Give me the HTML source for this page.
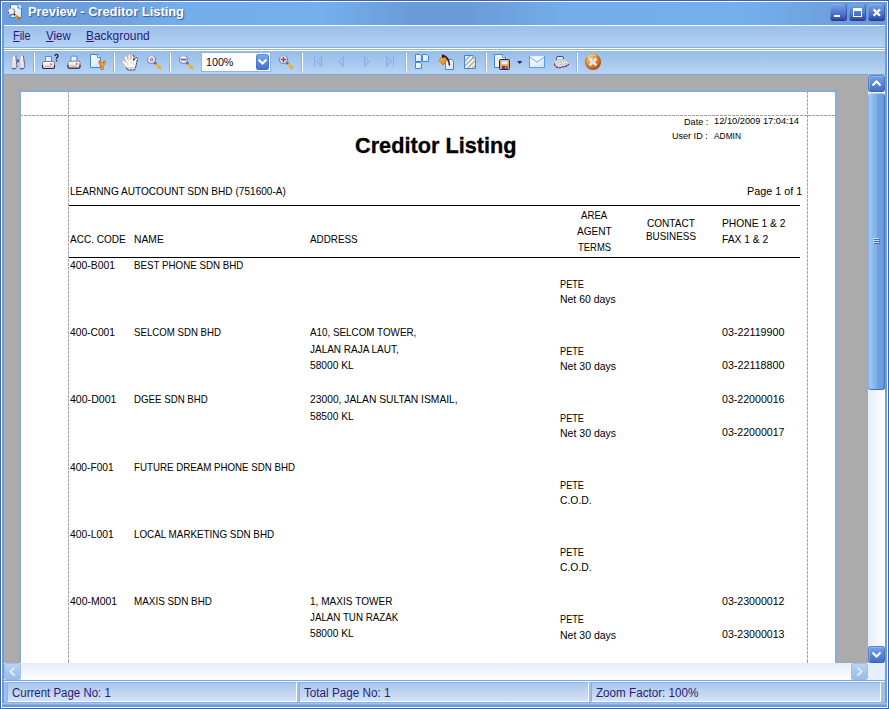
<!DOCTYPE html>
<html><head><meta charset="utf-8">
<style>
*{margin:0;padding:0;box-sizing:border-box}
html,body{width:889px;height:709px;overflow:hidden;background:#6b9ddb}
body{font-family:"Liberation Sans",sans-serif;position:relative}
#win{position:absolute;left:0;top:0;width:889px;height:709px;background:#6c9edc;overflow:hidden}
#win div,#win svg{position:absolute}
.t{position:absolute;white-space:pre;transform-origin:0 0;line-height:normal;font-family:"Liberation Sans",sans-serif}
#bo{left:0;top:0;width:889px;height:709px;border:1px solid #3d62b0}
#bi{left:1px;top:1px;width:887px;height:707px;border:1px solid #fff}
#title{left:2px;top:2px;width:885px;height:23px;background:linear-gradient(90deg,#6b9eda 0%,#6b9eda 10%,#73adeb 20%,#74b0ee 36%,#6a9cd9 46%,#6a9cd9 53%,#73adeb 64%,#74b0ee 83%,#6b9fdc 95%,#6a9cda 100%)}
#tline{left:4px;top:25px;width:881px;height:1px;background:#fff}
#menu{left:4px;top:26px;width:881px;height:22px;background:linear-gradient(180deg,#9bbfea 0%,#a8c9ed 50%,#b5d3f1 100%);border-bottom:1px solid #86aee6}
#ml1{left:4px;top:48px;width:881px;height:1px;background:#fff}
#ml2{left:4px;top:49px;width:881px;height:1px;background:#8cb2e5}
#ml3{left:4px;top:50px;width:881px;height:1px;background:#fff}
#tool{left:4px;top:51px;width:881px;height:23px;background:linear-gradient(180deg,#97bce9 0%,#a7c8ed 50%,#b8d4f1 100%)}
#tl{left:4px;top:74px;width:881px;height:1px;background:#79a6e0}
#gray{left:4px;top:75px;width:864px;height:588px;background:#ababab}
#page{left:19px;top:90px;width:818px;height:573px;background:#fff;border:2px solid #8aaad9;border-bottom:none}
.sep{width:1px;height:19px;top:53px;background:#fff;box-shadow:-1px 0 0 #8fb4e6}
.vd{width:1px;background:repeating-linear-gradient(180deg,#a2a2a2 0,#a2a2a2 3px,transparent 3px,transparent 4px);background-position:0 -1px}
.hd{height:1px;background:repeating-linear-gradient(90deg,#a2a2a2 0,#a2a2a2 3px,transparent 3px,transparent 4px);background-position:-1px 0}
.rule{height:1px;background:#000;left:69px;width:731px}
/* scrollbars */
#vs{left:868px;top:75px;width:17px;height:588px;background:linear-gradient(90deg,#e3eefc 0%,#f4f8fe 60%,#fdfeff 100%)}
#hs{left:4px;top:663px;width:864px;height:17px;background:linear-gradient(180deg,#e3eefc 0%,#f4f8fe 60%,#fdfeff 100%)}
#corner{left:868px;top:663px;width:17px;height:17px;background:#e6f0fc}
.sbtn{width:17px;height:17px;border-radius:3px;background:linear-gradient(180deg,#7aa5e6 0%,#5c8bd8 45%,#3f6cc4 100%);box-shadow:inset 0 0 0 1px rgba(60,90,180,.55), inset 1px 1px 0 1px rgba(160,200,245,.5)}
.sbtn.dis{background:linear-gradient(180deg,#bdd5f2 0%,#a6c5ec 55%,#9bbce8 100%);box-shadow:inset 0 0 0 1px rgba(150,185,230,.7)}
#thumb{left:868px;top:93px;width:17px;height:297px;border-radius:3px;background:linear-gradient(90deg,#7eaae6 0%,#a0c8f4 10%,#9cc4f2 18%,#8ab7ec 30%,#84b2ea 48%,#70a1e3 55%,#6c9de0 85%,#5d8dd6 92%,#466cbe 100%);box-shadow:inset 0 1px 0 rgba(190,220,250,.8), inset 0 -1px 0 rgba(60,95,185,.8)}
/* status */
#sl1{left:4px;top:680px;width:881px;height:1px;background:#7fa9e1}
#sl2{left:4px;top:681px;width:881px;height:1px;background:#f4f8fe}
#status{left:4px;top:682px;width:881px;height:21px;background:#9fc0ea;border-bottom:1px solid #8cb1e4}
.pan{top:682px;height:20px;background:linear-gradient(180deg,#a9c7ec 0%,#c0d6f1 55%,#d3e3f6 100%);border-top:1px solid #8cb1e4;border-left:1px solid #8cb1e4;border-bottom:1px solid #fff;border-right:1px solid #fff}
#sb1{left:2px;top:703px;width:885px;height:4px;background:linear-gradient(180deg,#b0ccf0,#7faae2 40%,#5c90d6)}
.wbtn{top:4px;width:17px;height:17px;border-radius:3px;background:linear-gradient(180deg,#76a5e6 0%,#5f8cd8 30%,#4a72c8 60%,#3450ac 88%,#2a2a8c 100%);box-shadow:inset -1px 0 0 rgba(45,60,150,.55),inset 1px 1px 0 rgba(150,190,240,.35)}
</style></head><body>
<div id="win">
<div id="title"></div>
<div id="tline"></div>
<div id="menu"></div>
<div id="ml1"></div><div id="ml2"></div><div id="ml3"></div>
<div id="tool"></div><div id="tl"></div>
<div class="sep" style="left:34px"></div><div class="sep" style="left:114px"></div><div class="sep" style="left:170px"></div><div class="sep" style="left:302px"></div><div class="sep" style="left:406px"></div><div class="sep" style="left:486px"></div><div class="sep" style="left:577px"></div>
<div id="combo" style="left:201px;top:52px;width:70px;height:20px;background:#fff;border:1px solid #8fb4e8"></div>
<div id="cbtn" style="left:256px;top:54px;width:13px;height:16px;border-radius:3px;background:linear-gradient(180deg,#7fb0ee 0%,#5b8fe0 45%,#3f6fcc 100%);box-shadow:inset 0 0 0 1px rgba(60,100,190,.5)"></div>
<svg style="left:256px;top:54px" width="13" height="16" viewBox="0 0 13 16"><path d="M2.6 5.6 L6.5 9.500 L10.400 5.600" fill="none" stroke="#fff" stroke-width="2.200"/></svg>
<div id="gray"></div>
<div id="page"></div>
<div class="hd" style="left:21px;top:115px;width:815px"></div>
<div class="vd" style="left:68px;top:92px;height:571px"></div>
<div class="vd" style="left:807px;top:92px;height:571px"></div>
<div class="rule" style="top:205px"></div>
<div class="rule" style="top:257px"></div>
<div id="vs"></div><div id="hs"></div><div id="corner"></div>
<div class="sbtn" style="left:868px;top:75px"></div>
<svg style="left:868px;top:75px" width="17" height="17" viewBox="0 0 17 17"><path d="M4.5 10.5 L8.5 6.5 L12.5 10.5" fill="none" stroke="#fff" stroke-width="2"/></svg>
<div id="thumb"></div>
<svg style="left:868px;top:236px" width="17" height="10" viewBox="0 0 17 10"><path d="M5 2.500 H11 M5 4.500 H11 M5 6.500 H11" stroke="#cfe2fb" stroke-width="1"/><path d="M6 3.500 H12 M6 5.500 H12 M6 7.500 H12" stroke="#4169c0" stroke-width="1"/></svg>
<div class="sbtn" style="left:868px;top:646px"></div>
<svg style="left:868px;top:646px" width="17" height="17" viewBox="0 0 17 17"><path d="M4.5 6.5 L8.5 10.5 L12.5 6.5" fill="none" stroke="#fff" stroke-width="2"/></svg>
<div class="sbtn dis" style="left:4px;top:663px"></div>
<svg style="left:4px;top:663px" width="17" height="17" viewBox="0 0 17 17"><path d="M10.5 4.5 L6.5 8.5 L10.5 12.5" fill="none" stroke="#dfeaf9" stroke-width="2"/></svg>
<div class="sbtn dis" style="left:851px;top:663px"></div>
<svg style="left:851px;top:663px" width="17" height="17" viewBox="0 0 17 17"><path d="M6.5 4.5 L10.5 8.5 L6.5 12.5" fill="none" stroke="#dfeaf9" stroke-width="2"/></svg>
<div id="sl1"></div><div id="sl2"></div><div id="status"></div>
<div class="pan" style="left:7px;width:290px"></div>
<div class="pan" style="left:299px;width:290px"></div>
<div class="pan" style="left:591px;width:290px"></div>
<div id="sb1"></div>
<div class="wbtn" style="left:830px"></div><div class="wbtn" style="left:849px"></div><div class="wbtn" style="left:868px"></div>
<svg style="left:830px;top:4px" width="55" height="17" viewBox="0 0 55 17"><rect x="4" y="11" width="6" height="2" fill="#fff"/><rect x="23.5" y="4.500" width="8" height="8" fill="none" stroke="#fff" stroke-width="1"/><rect x="23" y="4" width="9" height="3" fill="#fff"/><path d="M43.600 5.400 L50 11.800 M50 5.400 L43.600 11.800" stroke="#fff" stroke-width="2.200"/></svg>
<svg style="left:0;top:0" width="889" height="80" viewBox="0 0 889 80">
<defs>
<linearGradient id="pg" x1="0" y1="0" x2="1" y2="1"><stop offset="0" stop-color="#ffffff"/><stop offset="1" stop-color="#cfe2f7"/></linearGradient>
<linearGradient id="hn" x1="0" y1="0" x2="1" y2="1"><stop offset="0" stop-color="#f6c45a"/><stop offset="1" stop-color="#d8741a"/></linearGradient>
<linearGradient id="pr" x1="0" y1="0" x2="0" y2="1"><stop offset="0" stop-color="#ffffff"/><stop offset="1" stop-color="#cfcfd8"/></linearGradient>
<radialGradient id="cl" cx="0.35" cy="0.3" r="0.85"><stop offset="0" stop-color="#f9cf78"/><stop offset="0.45" stop-color="#e38f34"/><stop offset="0.8" stop-color="#bb4f1c"/><stop offset="1" stop-color="#a03812"/></radialGradient>
<linearGradient id="ln" x1="0" y1="0" x2="1" y2="1"><stop offset="0" stop-color="#ffffff"/><stop offset="1" stop-color="#c4e2f6"/></linearGradient>
<pattern id="hat" width="3.5" height="3.5" patternUnits="userSpaceOnUse" patternTransform="rotate(-45)"><rect width="3.5" height="3.5" fill="#f4f4f4"/><rect width="3.5" height="1.6" fill="#b5b2a8"/></pattern>
</defs>
<!-- title icon -->
<g>
<path d="M10.500 4.500 H18 V8 H21.500 V17.500 H10.500 Z" fill="url(#pg)" stroke="#3a82d2" stroke-width="1"/>
<path d="M18.600 4.200 L22 7.600 H18.600 Z" fill="#fdfdfb"/>
<path d="M18.600 4.200 L22 7.600" stroke="#d9d2c0" stroke-width="0.600"/>
<path d="M14.600 14.600 L19 18.800" stroke="url(#hn)" stroke-width="2.600" stroke-linecap="round"/>
<path d="M17 16.300 L19.300 18.600" stroke="#c8601a" stroke-width="1.400" stroke-linecap="round" opacity="0.700"/>
<circle cx="14.400" cy="14.500" r="0.900" fill="#15101c"/>
<circle cx="11.500" cy="11.500" r="3.100" fill="url(#ln)" stroke="#cdb98a" stroke-width="1"/>
<path d="M13.300 9 A3.100 3.100 0 0 1 10 14.300" fill="none" stroke="#3a46a8" stroke-width="1" stroke-dasharray="1.600 0.700"/>
<rect x="8" y="12" width="1" height="1" fill="#7a1a8a"/><rect x="11" y="14.300" width="1.200" height="0.900" fill="#b8283a"/>
</g>
<!-- binoculars -->
<g>
<path d="M13.200 55.600 Q14.500 54.900 15.800 55.600 L16.800 65.500 Q16.800 69 14 69 Q11.200 69 11.200 65.500 Z" fill="url(#pr)" stroke="#cdbfa8" stroke-width="1"/>
<path d="M15.800 55.600 L16.800 65.500 Q16.800 69 14 69 Q12.500 69 11.800 68" fill="none" stroke="#3c3a98" stroke-width="0.900" stroke-dasharray="2.200 0.800"/>
<path d="M20.700 55.600 Q22 54.900 23.300 55.600 L24.800 65.500 Q24.800 69 22 69 Q19.200 69 19.200 65.500 Z" fill="url(#pr)" stroke="#cdbfa8" stroke-width="1"/>
<path d="M23.300 55.600 L24.800 65.500 Q24.800 69 22 69 Q20.500 69 19.800 68" fill="none" stroke="#3c3a98" stroke-width="0.900" stroke-dasharray="2.200 0.800"/>
<rect x="16.800" y="59.500" width="2.400" height="2.600" fill="#4a5ab8"/>
<circle cx="14" cy="66" r="2.100" fill="#cfe6f8"/><circle cx="22" cy="66" r="2.100" fill="#cfe6f8"/>
<path d="M12.400 68.400 Q14 69.300 15.600 68.400 M20.400 68.400 Q22 69.300 23.600 68.400" stroke="#8a2a4a" stroke-width="0.700" fill="none"/>
</g>
<!-- printers -->
<g id="prn">
<path d="M45.500 62 V56.500 H51.500 V62" fill="url(#pg)" stroke="#4a92dc" stroke-width="1"/>
<rect x="42.500" y="61.500" width="12" height="7" rx="1.500" fill="url(#pr)" stroke="#8a7a90" stroke-width="1"/>
<path d="M42.500 65 V67 Q42.500 68.500 44 68.500 H53 Q54.500 68.500 54.500 67 V65" fill="none" stroke="#3a1a3a" stroke-width="1.100"/>
<rect x="45" y="66" width="6" height="1" fill="#c8b48a"/>
<rect x="50.500" y="63.500" width="1.300" height="1.300" fill="#8a1a2a"/>
</g>
<path d="M55 56 Q55 54.300 56.500 54.300 Q58 54.300 58 56 Q58 57 56.500 58 V59.200" fill="none" stroke="#241a5a" stroke-width="1.300"/><rect x="55.800" y="60.200" width="1.400" height="1.300" fill="#241a5a"/>
<use href="#prn" x="25.500" y="-0.300"/>
<!-- page+wrench -->
<g>
<path d="M90.500 54.500 H97.500 L100.500 57.500 V67.500 H90.500 Z" fill="url(#pg)" stroke="#3f88d8" stroke-width="1"/>
<path d="M97.500 54.500 V57.500 H100.500" fill="#fff" stroke="#3f88d8" stroke-width="0.900"/>
<path d="M99 61 V63.200 Q99 65 101 65.300 V69.500 H103.200 V65.300 Q105.200 65 105.200 63.200 V61 H103.700 V63 H100.500 V61 Z" fill="#f4a634" stroke="#c8701a" stroke-width="0.900"/>
</g>
<!-- hand -->
<g>
<path d="M127.500 70 L126.500 67.500 L122.800 63 Q121.600 61.200 122.800 60.500 Q124 60 125.500 62 L126.300 63 L124.600 58 Q124.200 56.400 125.400 56.100 Q126.500 55.900 127 57.300 L128.200 60.500 L128 56 Q128 54.400 129.300 54.400 Q130.500 54.400 130.600 56 L130.800 60 L131.500 56.300 Q131.800 54.900 133 55.100 Q134.200 55.400 134 57 L133.500 60.800 L135 58.600 Q135.800 57.300 136.900 57.800 Q137.900 58.400 137.300 60 L136.300 64 Q136 67 134.500 70 Z" fill="#fff" stroke="#c9bda2" stroke-width="0.900" stroke-linejoin="round"/>
<path d="M133 55.100 Q134.200 55.400 134 57 L133.500 60.800 L135 58.600 Q135.800 57.300 136.900 57.800 Q137.900 58.400 137.300 60 L136.300 64 Q136 67 134.500 70 L128 70" fill="none" stroke="#2c1c70" stroke-width="0.900" stroke-dasharray="2.500 0.700"/>
<path d="M126.500 67.500 L127.500 70" stroke="#2c1c70" stroke-width="0.900"/>
<path d="M127.300 62 L128.200 65 M130.800 61 V64.500 M133.300 62 L132.800 65" stroke="#c8d4e8" stroke-width="0.700"/>
<path d="M128 69 H134.500 L135.300 67 H127.200 Z" fill="#d8d8d8"/>
</g>
<!-- magnifiers -->
<g id="mag">
<path d="M154.800 62.800 L160 67.800" stroke="#f0a428" stroke-width="2.600" stroke-linecap="round"/>
<path d="M157.300 64.300 l-1.300 1.300 M158.800 65.800 l-1.300 1.300" stroke="#f8dc9a" stroke-width="0.700"/>
<path d="M154.200 62.200 L156 64" stroke="#3f6fc0" stroke-width="2.400"/>
<circle cx="151.500" cy="59.500" r="4" fill="url(#ln)" stroke="#6690d4" stroke-width="1.200"/>
<path d="M147.900 57.800 A4 4 0 0 1 153.500 56" fill="none" stroke="#a6c4ee" stroke-width="1.100"/>
</g>
<circle cx="151.500" cy="59.500" r="1.300" fill="#f6d8a0" stroke="#c04028" stroke-width="0.900"/>
<use href="#mag" x="32"/>
<rect x="180.800" y="58.800" width="5.400" height="1.500" fill="#c8342a"/>
<use href="#mag" x="132"/>
<path d="M280.800 59.500 H286.200 M283.500 56.800 V62.200" stroke="#c8342a" stroke-width="1.500"/>
<!-- nav arrows disabled -->
<g fill="#9dbfeb" stroke="#86afe6" stroke-width="1" stroke-linejoin="round">
<path d="M314.500 56 V67" fill="none"/><path d="M321.500 56.500 L316 61.500 L321.500 66.500 Z"/>
<path d="M343.500 56.500 L338.500 61.500 L343.500 66.500 Z"/>
<path d="M364.500 56.500 L369.500 61.500 L364.500 66.500 Z"/>
<path d="M386.500 56.500 L392 61.500 L386.500 66.500 Z"/><path d="M393.500 56 V67" fill="none"/>
</g>
<!-- multi pages -->
<g fill="url(#pg)" stroke="#3f88d8" stroke-width="1" stroke-linejoin="miter">
<path d="M415.500 54.500 H420 L421.500 56 V61.500 H415.500 Z"/><path d="M422.500 54.500 H427 L428.500 56 V61.500 H422.500 Z"/><path d="M415.500 62.500 H420 L421.500 64 V68.500 H415.500 Z"/>
</g>
<!-- bucket -->
<g>
<path d="M445.500 59.500 H451.500 L453.500 61.500 V69.500 H445.500 Z" fill="url(#pg)" stroke="#3f88d8" stroke-width="1"/>
<path d="M443 55.800 L447.500 60.300 L443 65 L438.800 60.500 Z" fill="url(#hn)" stroke="#c07a28" stroke-width="0.800"/>
<path d="M442.700 54.500 L443 58 M443 55.500 Q449 57 449.500 65.500" fill="none" stroke="#2e0c10" stroke-width="1.500"/>
</g>
<!-- hatched page -->
<g>
<path d="M464.500 55.500 H473 L475.500 58 V68.500 H464.500 Z" fill="url(#hat)" stroke="#3f88d8" stroke-width="1"/>
<path d="M473 55.500 V58 H475.500" fill="#fff" stroke="#3f88d8" stroke-width="0.900"/>
</g>
<!-- export -->
<g>
<path d="M494.500 54.500 H502.500 L505.500 57.500 V67.500 H494.500 Z" fill="url(#pg)" stroke="#3f88d8" stroke-width="1"/>
<path d="M502.500 54.500 V57.500 H505.500" fill="#fff" stroke="#3f88d8" stroke-width="0.900"/>
<rect x="499.500" y="59.500" width="10" height="10" rx="1" fill="#e9a440" stroke="#4a2410" stroke-width="1"/>
<rect x="501.500" y="60" width="6" height="4.300" fill="#e8f2fc"/><rect x="501.500" y="60" width="6" height="1.500" fill="#a8c8f0"/>
<rect x="502" y="66" width="5.500" height="3" fill="#4a3ab8"/><rect x="505" y="66.500" width="1.300" height="2" fill="#e9a440"/>
<path d="M517 61 H522.500 L519.750 64 Z" fill="#38188a"/>
</g>
<!-- envelope -->
<g>
<rect x="529.500" y="56.500" width="15" height="11" fill="url(#pg)" stroke="#5a9ee6" stroke-width="1"/>
<path d="M530 56.500 H544" stroke="#dfeefc" stroke-width="1"/>
<path d="M530 57.300 L537 62 L544 57.300" fill="#f4f9ff" stroke="#6aa8ea" stroke-width="1"/>
</g>
<!-- send -->
<g>
<path d="M556.500 60.500 V57.800 Q556.500 56.500 558 56.500 H562 Q563.500 56.500 563.500 58 V60" fill="#d6e4f6" stroke="#3c4cb4" stroke-width="1"/>
<path d="M554.500 62.800 Q555 60.200 558 60 L564.500 59.500 Q569 61 568.600 64 Q567.200 66.500 563 66.800 Q559 68.600 556.500 67 Q554 65.500 554.500 62.800 Z" fill="#dcdcd8" stroke="#c4bca8" stroke-width="0.800"/>
<path d="M554.600 63.500 Q554.400 65.800 556.500 67 Q559 68.600 563 66.800 Q567.200 66.500 568.600 64" fill="none" stroke="#6a1a88" stroke-width="1.100" stroke-dasharray="2.600 0.600"/>
<path d="M557 63.500 Q560 61 564 61.500 M559 65.500 Q562 63.500 566.500 63.800" stroke="#a9c6ec" stroke-width="1" fill="none"/>
<path d="M557.500 62 L559 64.500 M562 61 L564 64" stroke="#f4f4f0" stroke-width="0.800"/>
</g>
<!-- close -->
<g>
<circle cx="593" cy="62" r="8" fill="url(#cl)"/>
<circle cx="593" cy="62" r="7.500" fill="none" stroke="#b4501c" stroke-width="1" opacity="0.550"/>
<path d="M587.500 57.500 A7 7 0 0 1 596 55.700" fill="none" stroke="#fde7a8" stroke-width="1.200" opacity="0.800"/>
<path d="M589.600 58.600 L596.400 65.400 M596.400 58.600 L589.600 65.400" stroke="#f1f5fb" stroke-width="2.200"/>
<path d="M591.500 60.500 L594.500 63.500 M594.500 60.500 L591.500 63.500" stroke="#bcd9f4" stroke-width="1.400"/>
</g>
</svg>

<span class="t" style="left:355.3px;top:132.69px;font-size:22px;transform:scaleX(0.9861);color:#000;font-weight:bold;-webkit-text-stroke:0.3px #000;">Creditor Listing</span>
<span class="t" style="left:684.4px;top:115.81px;font-size:9.6px;transform:scaleX(0.9489);color:#000;">Date :</span>
<span class="t" style="left:713.6px;top:114.81px;font-size:9.6px;transform:scaleX(0.9656);color:#000;">12/10/2009 17:04:14</span>
<span class="t" style="left:672.3px;top:129.81px;font-size:9.6px;transform:scaleX(0.9430);color:#000;">User ID :</span>
<span class="t" style="left:713.8px;top:129.81px;font-size:9.6px;transform:scaleX(0.8732);color:#000;">ADMIN</span>
<span class="t" style="left:70.3px;top:184.89px;font-size:11.5px;transform:scaleX(0.8767);color:#000;">LEARNNG AUTOCOUNT SDN BHD (751600-A)</span>
<span class="t" style="left:747.2px;top:184.89px;font-size:11.5px;transform:scaleX(0.9417);color:#000;">Page 1 of 1</span>
<span class="t" style="left:70.3px;top:232.59px;font-size:11.5px;transform:scaleX(0.8732);color:#000;">ACC. CODE</span>
<span class="t" style="left:134.2px;top:232.59px;font-size:11.5px;transform:scaleX(0.8967);color:#000;">NAME</span>
<span class="t" style="left:310.3px;top:232.59px;font-size:11.5px;transform:scaleX(0.8578);color:#000;">ADDRESS</span>
<span class="t" style="left:581.2px;top:209.19px;font-size:11.5px;transform:scaleX(0.8395);color:#000;">AREA</span>
<span class="t" style="left:577.1px;top:224.59px;font-size:11.5px;transform:scaleX(0.8782);color:#000;">AGENT</span>
<span class="t" style="left:577.8px;top:241.49px;font-size:11.5px;transform:scaleX(0.8224);color:#000;">TERMS</span>
<span class="t" style="left:647.3px;top:216.79px;font-size:11.5px;transform:scaleX(0.8751);color:#000;">CONTACT</span>
<span class="t" style="left:646.3px;top:229.59px;font-size:11.5px;transform:scaleX(0.8595);color:#000;">BUSINESS</span>
<span class="t" style="left:722.2px;top:216.79px;font-size:11.5px;transform:scaleX(0.8950);color:#000;">PHONE 1 &amp; 2</span>
<span class="t" style="left:722.2px;top:233.19px;font-size:11.5px;transform:scaleX(0.8941);color:#000;">FAX 1 &amp; 2</span>
<span class="t" style="left:70.3px;top:258.89px;font-size:11.5px;transform:scaleX(0.9023);color:#000;">400-B001</span>
<span class="t" style="left:134.2px;top:258.89px;font-size:11.5px;transform:scaleX(0.8489);color:#000;">BEST PHONE SDN BHD</span>
<span class="t" style="left:560.2px;top:277.89px;font-size:11.5px;transform:scaleX(0.7988);color:#000;">PETE</span>
<span class="t" style="left:560.2px;top:293.39px;font-size:11.5px;transform:scaleX(0.9092);color:#000;">Net 60 days</span>
<span class="t" style="left:70.3px;top:325.79px;font-size:11.5px;transform:scaleX(0.8908);color:#000;">400-C001</span>
<span class="t" style="left:134.2px;top:325.79px;font-size:11.5px;transform:scaleX(0.8403);color:#000;">SELCOM SDN BHD</span>
<span class="t" style="left:310.3px;top:325.79px;font-size:11.5px;transform:scaleX(0.8559);color:#000;">A10, SELCOM TOWER,</span>
<span class="t" style="left:310.3px;top:342.99px;font-size:11.5px;transform:scaleX(0.8673);color:#000;">JALAN RAJA LAUT,</span>
<span class="t" style="left:310.3px;top:358.99px;font-size:11.5px;transform:scaleX(0.8873);color:#000;">58000 KL</span>
<span class="t" style="left:560.2px;top:344.79px;font-size:11.5px;transform:scaleX(0.7988);color:#000;">PETE</span>
<span class="t" style="left:560.2px;top:360.29px;font-size:11.5px;transform:scaleX(0.9141);color:#000;">Net 30 days</span>
<span class="t" style="left:722.3px;top:325.79px;font-size:11.5px;transform:scaleX(0.9337);color:#000;">03-22119900</span>
<span class="t" style="left:722.3px;top:358.79px;font-size:11.5px;transform:scaleX(0.9337);color:#000;">03-22118800</span>
<span class="t" style="left:70.3px;top:392.79px;font-size:11.5px;transform:scaleX(0.9185);color:#000;">400-D001</span>
<span class="t" style="left:134.2px;top:392.79px;font-size:11.5px;transform:scaleX(0.8430);color:#000;">DGEE SDN BHD</span>
<span class="t" style="left:310.3px;top:392.79px;font-size:11.5px;transform:scaleX(0.8945);color:#000;">23000, JALAN SULTAN ISMAIL,</span>
<span class="t" style="left:310.3px;top:410.29px;font-size:11.5px;transform:scaleX(0.8873);color:#000;">58500 KL</span>
<span class="t" style="left:560.2px;top:411.79px;font-size:11.5px;transform:scaleX(0.7988);color:#000;">PETE</span>
<span class="t" style="left:560.2px;top:427.29px;font-size:11.5px;transform:scaleX(0.9141);color:#000;">Net 30 days</span>
<span class="t" style="left:722.3px;top:392.79px;font-size:11.5px;transform:scaleX(0.9219);color:#000;">03-22000016</span>
<span class="t" style="left:722.3px;top:425.79px;font-size:11.5px;transform:scaleX(0.9219);color:#000;">03-22000017</span>
<span class="t" style="left:70.3px;top:461.19px;font-size:11.5px;transform:scaleX(0.8876);color:#000;">400-F001</span>
<span class="t" style="left:134.2px;top:461.19px;font-size:11.5px;transform:scaleX(0.8456);color:#000;">FUTURE DREAM PHONE SDN BHD</span>
<span class="t" style="left:560.2px;top:479.49px;font-size:11.5px;transform:scaleX(0.7988);color:#000;">PETE</span>
<span class="t" style="left:560.2px;top:494.19px;font-size:11.5px;transform:scaleX(0.9021);color:#000;">C.O.D.</span>
<span class="t" style="left:70.3px;top:527.99px;font-size:11.5px;transform:scaleX(0.8990);color:#000;">400-L001</span>
<span class="t" style="left:134.2px;top:527.99px;font-size:11.5px;transform:scaleX(0.8553);color:#000;">LOCAL MARKETING SDN BHD</span>
<span class="t" style="left:560.2px;top:546.29px;font-size:11.5px;transform:scaleX(0.7988);color:#000;">PETE</span>
<span class="t" style="left:560.2px;top:560.99px;font-size:11.5px;transform:scaleX(0.9021);color:#000;">C.O.D.</span>
<span class="t" style="left:70.3px;top:594.79px;font-size:11.5px;transform:scaleX(0.9093);color:#000;">400-M001</span>
<span class="t" style="left:134.2px;top:594.79px;font-size:11.5px;transform:scaleX(0.8595);color:#000;">MAXIS SDN BHD</span>
<span class="t" style="left:310.3px;top:594.79px;font-size:11.5px;transform:scaleX(0.8762);color:#000;">1, MAXIS TOWER</span>
<span class="t" style="left:310.3px;top:610.79px;font-size:11.5px;transform:scaleX(0.8485);color:#000;">JALAN TUN RAZAK</span>
<span class="t" style="left:310.3px;top:627.49px;font-size:11.5px;transform:scaleX(0.8873);color:#000;">58000 KL</span>
<span class="t" style="left:560.2px;top:613.09px;font-size:11.5px;transform:scaleX(0.7988);color:#000;">PETE</span>
<span class="t" style="left:560.2px;top:628.59px;font-size:11.5px;transform:scaleX(0.9141);color:#000;">Net 30 days</span>
<span class="t" style="left:722.3px;top:594.99px;font-size:11.5px;transform:scaleX(0.9219);color:#000;">03-23000012</span>
<span class="t" style="left:722.3px;top:627.99px;font-size:11.5px;transform:scaleX(0.9219);color:#000;">03-23000013</span>
<span class="t" style="left:28.0px;top:4.48px;font-size:13.5px;transform:scaleX(0.9539);color:#fff;font-weight:bold;text-shadow:1px 1px 1px #35599c;">Preview - Creditor Listing</span>
<span class="t" style="left:13.4px;top:29.16px;font-size:12.2px;transform:scaleX(0.8961);color:#2a1a7c;"><u>F</u>ile</span>
<span class="t" style="left:46.3px;top:29.16px;font-size:12.2px;transform:scaleX(0.9426);color:#2a1a7c;"><u>V</u>iew</span>
<span class="t" style="left:86.1px;top:29.16px;font-size:12.2px;transform:scaleX(0.9793);color:#2a1a7c;"><u>B</u>ackground</span>
<span class="t" style="left:206.0px;top:56.29px;font-size:11.5px;transform:scaleX(0.9313);color:#0a0630;">100%</span>
<span class="t" style="left:12.2px;top:685.94px;font-size:12px;transform:scaleX(0.9556);color:#2a1a7c;">Current Page No: 1</span>
<span class="t" style="left:303.7px;top:685.94px;font-size:12px;transform:scaleX(0.9748);color:#2a1a7c;">Total Page No: 1</span>
<span class="t" style="left:595.6px;top:685.94px;font-size:12px;transform:scaleX(0.9718);color:#2a1a7c;">Zoom Factor: 100%</span>
<div id="bo"></div><div id="bi"></div>
</div>
</body></html>
